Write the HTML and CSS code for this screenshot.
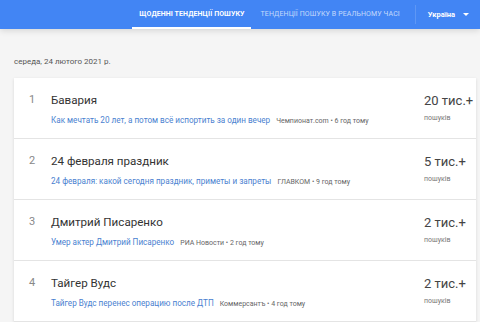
FILE: index.html
```html
<!DOCTYPE html>
<html lang="uk">
<head>
  <meta charset="UTF-8">
  <meta name="viewport" content="width=device-width, initial-scale=1.0">
  <title>Google Trends</title>
  <link rel="stylesheet" href="styles.css">
</head>
<body>
<header class="top-bar">
  <nav class="tabs">
    <a class="tab active">ЩОДЕННІ ТЕНДЕНЦІЇ ПОШУКУ</a>
    <a class="tab">ТЕНДЕНЦІЇ ПОШУКУ В РЕАЛЬНОМУ ЧАСІ</a>
  </nav>
  <div class="divider"></div>
  <div class="geo">Україна <span class="caret"></span></div>
</header>

<main class="content">
  <div class="date">середа, 24 лютого 2021 р.</div>

  <div class="card">
    <div class="item">
      <div class="rank">1</div>
      <div class="details">
        <div class="title">Бавария</div>
        <div class="summary"><a class="link">Как мечтать 20 лет, а потом всё испортить за один вечер</a> <span class="source">Чемпионат.com • 6 год тому</span></div>
      </div>
      <div class="count">
        <div class="num">20 тис.+</div>
        <div class="label">пошуків</div>
      </div>
    </div>

    <div class="item">
      <div class="rank">2</div>
      <div class="details">
        <div class="title">24 февраля праздник</div>
        <div class="summary"><a class="link">24 февраля: какой сегодня праздник, приметы и запреты</a> <span class="source">ГЛАВКОМ • 9 год тому</span></div>
      </div>
      <div class="count">
        <div class="num">5 тис.+</div>
        <div class="label">пошуків</div>
      </div>
    </div>

    <div class="item">
      <div class="rank">3</div>
      <div class="details">
        <div class="title">Дмитрий Писаренко</div>
        <div class="summary"><a class="link">Умер актер Дмитрий Писаренко</a> <span class="source">РИА Новости • 2 год тому</span></div>
      </div>
      <div class="count">
        <div class="num">2 тис.+</div>
        <div class="label">пошуків</div>
      </div>
    </div>

    <div class="item">
      <div class="rank">4</div>
      <div class="details">
        <div class="title">Тайгер Вудс</div>
        <div class="summary"><a class="link">Тайгер Вудс перенес операцию после ДТП</a> <span class="source">Коммерсантъ • 4 год тому</span></div>
      </div>
      <div class="count">
        <div class="num">2 тис.+</div>
        <div class="label">пошуків</div>
      </div>
    </div>
  </div>
</main>
</body>
</html>
```

FILE: styles.css
```css
body {
  margin: 0;
  font-family: Roboto, "Liberation Sans", sans-serif;
  background-color: #f5f5f5;
  overflow: hidden;
}

.top-bar {
  height: 29px;
  background-color: #4285f4;
  display: flex;
  justify-content: flex-end;
  align-items: stretch;
  padding-right: 11px;
  box-shadow: 0 2px 6px rgba(0,0,0,0.12);
}

.tabs {
  display: flex;
  align-items: stretch;
}

.tab {
  display: flex;
  align-items: center;
  padding: 0 6px 0 7px;
  font-size: 7px;
  color: rgba(255,255,255,0.7);
  letter-spacing: 0.1px;
  border-bottom: 2px solid transparent;
}

.tab.active {
  color: #fff;
  font-weight: bold;
  border-bottom-color: #fff;
  margin-right: 3px;
}

.divider {
  width: 1px;
  background-color: rgba(255,255,255,0.15);
  margin: 5px 12px 5px 9px;
}

.geo {
  display: flex;
  align-items: center;
  color: #fff;
  font-weight: bold;
  font-size: 7.5px;
}

.caret {
  width: 0;
  height: 0;
  border-left: 3px solid transparent;
  border-right: 3px solid transparent;
  border-top: 3px solid #fff;
  margin-left: 8px;
}

.content {
  padding: 0 4px 0 14px;
}

.date {
  font-size: 8px;
  color: #555;
  height: 49px;
  line-height: 65px;
}

.card {
  background: #fff;
  box-shadow: 0 1px 3px rgba(0,0,0,0.12);
}

.item {
  display: flex;
  height: 60px;
  border-bottom: 1px solid #e4e4e4;
}

.rank {
  width: 22px;
  padding-left: 15px;
  padding-top: 14px;
  font-size: 11px;
  line-height: 16px;
  color: #888;
}

.details {
  flex: 1;
  padding-top: 14px;
}

.title {
  font-size: 11.6px;
  line-height: 16px;
  color: #333;
}

.summary {
  margin-top: 4px;
  line-height: 12px;
  white-space: nowrap;
}

.link {
  font-size: 8.15px;
  color: #4a7fd0;
}

.source {
  font-size: 7px;
  color: #666;
  margin-left: 2px;
}

.count {
  width: 52px;
  padding-top: 14px;
}

.num {
  font-size: 13px;
  line-height: 17px;
  color: #444;
}

.label {
  margin-top: 3px;
  font-size: 7px;
  line-height: 12px;
  color: #777;
}
```
